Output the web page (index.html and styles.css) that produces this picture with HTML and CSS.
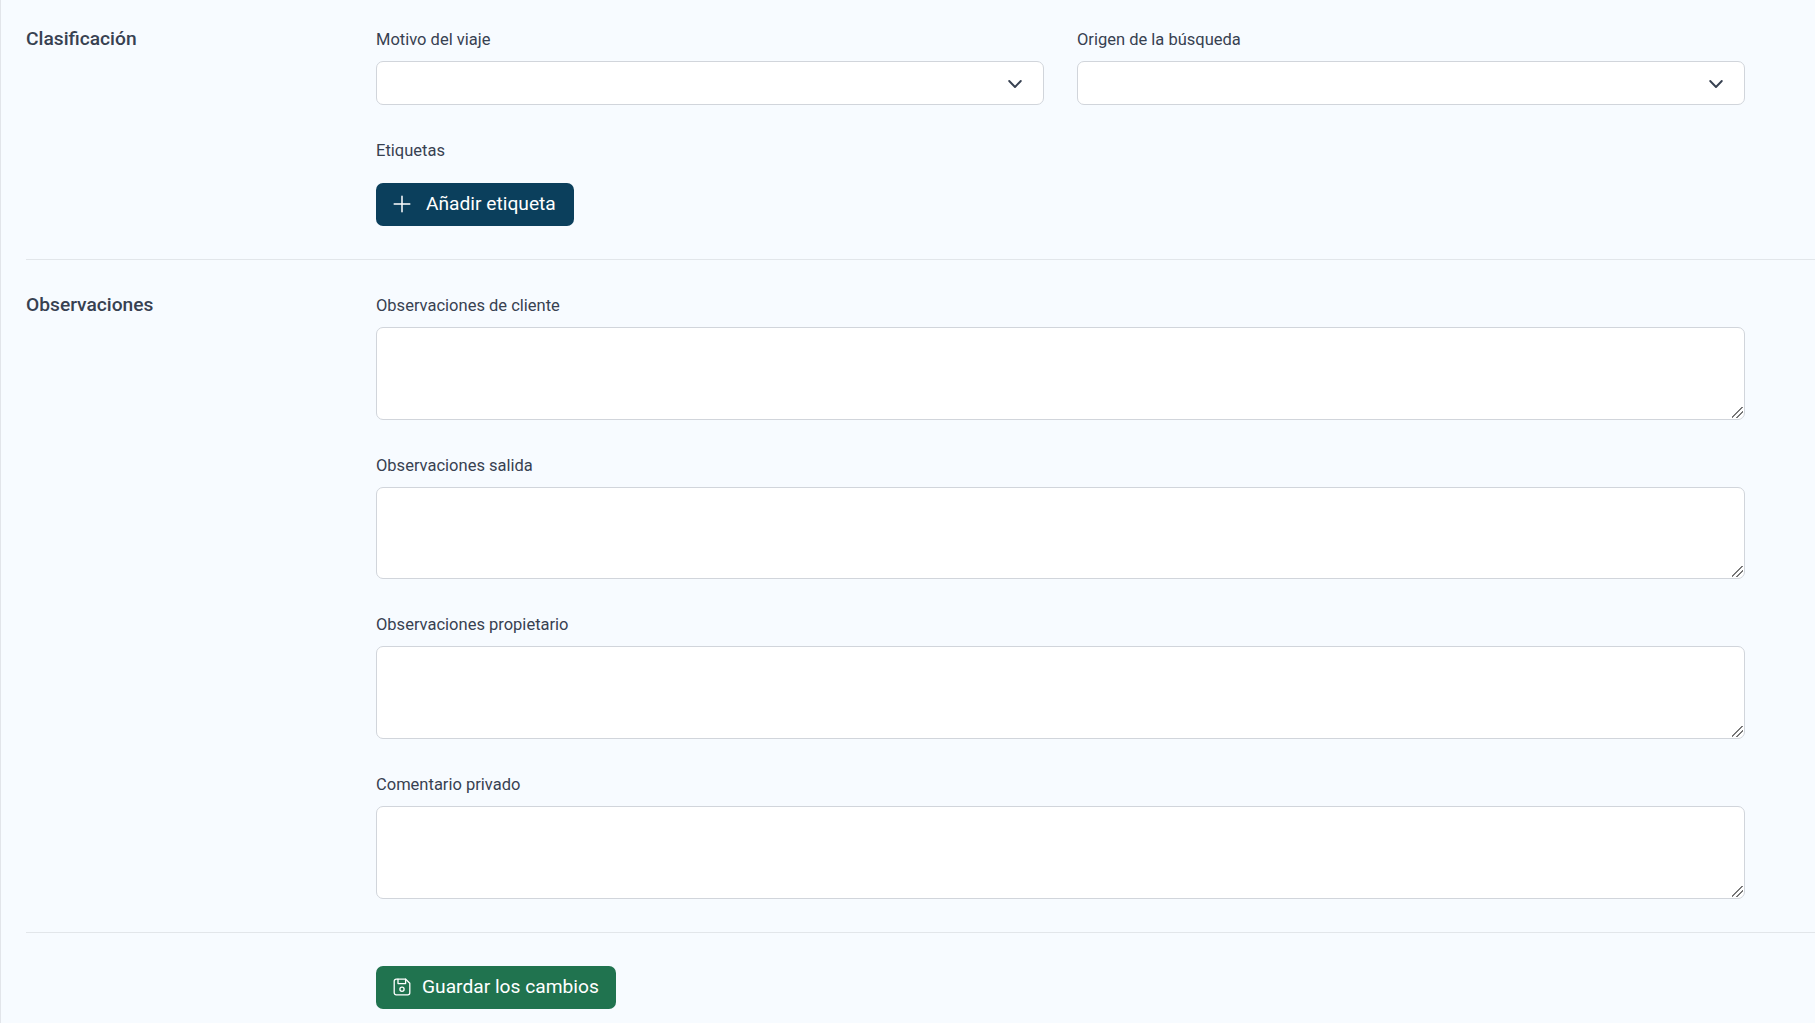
FILE: index.html
```html
<!DOCTYPE html>
<html lang="es">
<head>
<meta charset="utf-8">
<title>Clasificación y observaciones</title>
<link rel="stylesheet" href="styles.css">
</head>
<body>
<main class="page">
  <section class="section section-first">
    <h2 class="section-title">Clasificación</h2>
    <div class="fields">
      <div class="two-cols">
        <div class="field">
          <label class="label" for="motivo">Motivo del viaje</label>
          <div class="select-wrap">
            <select class="select" id="motivo"><option></option></select>
            <svg class="chevron" viewBox="0 0 20 20" fill="none" stroke="currentColor" stroke-width="1.9" stroke-linecap="round" stroke-linejoin="round"><path d="M4.2 7l5.8 6 5.8-6"/></svg>
          </div>
        </div>
        <div class="field">
          <label class="label" for="origen">Origen de la búsqueda</label>
          <div class="select-wrap">
            <select class="select" id="origen"><option></option></select>
            <svg class="chevron" viewBox="0 0 20 20" fill="none" stroke="currentColor" stroke-width="1.9" stroke-linecap="round" stroke-linejoin="round"><path d="M4.2 7l5.8 6 5.8-6"/></svg>
          </div>
        </div>
      </div>
      <div class="field">
        <span class="label">Etiquetas</span>
        <div class="button-row">
          <button class="btn btn-navy" type="button">
            <svg class="icon-plus" viewBox="0 0 18 18" fill="none" stroke="currentColor" stroke-width="1.5" stroke-linecap="round"><path d="M9 1.2v15.6M1.2 9h15.6"/></svg>
            Añadir etiqueta
          </button>
        </div>
      </div>
    </div>
  </section>

  <section class="section section-notes">
    <h2 class="section-title">Observaciones</h2>
    <div class="fields fields-notes">
      <div class="field">
        <label class="label" for="o1">Observaciones de cliente</label>
        <textarea class="textarea" id="o1"></textarea>
      </div>
      <div class="field">
        <label class="label" for="o2">Observaciones salida</label>
        <textarea class="textarea" id="o2"></textarea>
      </div>
      <div class="field">
        <label class="label" for="o3">Observaciones propietario</label>
        <textarea class="textarea" id="o3"></textarea>
      </div>
      <div class="field">
        <label class="label" for="o4">Comentario privado</label>
        <textarea class="textarea" id="o4"></textarea>
      </div>
    </div>
  </section>

  <footer class="actions">
    <button class="btn btn-green" type="button">
      <svg class="icon-save" viewBox="0 0 18 18" fill="none" stroke="currentColor" stroke-width="1.3" stroke-linecap="round" stroke-linejoin="round"><path d="M3.2 1.2h9.5l4.1 4.1v9.5a2 2 0 0 1-2 2H3.2a2 2 0 0 1-2-2V3.2a2 2 0 0 1 2-2z"/><path d="M5 1.2v4.4h7.6V1.2"/><circle cx="9" cy="11.3" r="2.1"/></svg>
      Guardar los cambios
    </button>
  </footer>
</main>
</body>
</html>
```

FILE: styles.css
```css
* {
  box-sizing: border-box;
}

html,
body {
  margin: 0;
  height: 100%;
}

body {
  background: #f7fbff;
  color: #374151;
  font-family: Roboto, "Liberation Sans", sans-serif;
  font-size: 16px;
  overflow: hidden;
}

.page {
  min-height: 100%;
  border-left: 1px solid #e2e5ea;
  padding-left: 25px;
}

.section {
  display: grid;
  grid-template-columns: 350px 1fr;
  padding: 33px 70px 33px 0;
  border-bottom: 1px solid #e2e6ea;
}

.section-first {
  padding-top: 28px;
}

.section-notes {
  padding-top: 34.1px;
  padding-bottom: 33.3px;
}

.section-title {
  margin: 0;
  font-size: 19.2px;
  line-height: 22px;
  font-weight: 500;
  color: #374151;
}

.fields {
  display: flex;
  flex-direction: column;
  gap: 34px;
}

.fields-notes {
  gap: 33.8px;
}

.two-cols {
  display: grid;
  grid-template-columns: 1fr 1fr;
  gap: 33px;
}

.field {
  display: flex;
  flex-direction: column;
  gap: 9px;
}

.label {
  display: block;
  font-size: 16.5px;
  line-height: 24px;
  color: #374151;
}

.select-wrap {
  position: relative;
}

.select {
  display: block;
  width: 100%;
  height: 44px;
  appearance: none;
  background: #fff;
  border: 1px solid #d1d5db;
  border-radius: 7px;
}

.chevron {
  position: absolute;
  top: 12.8px;
  right: 19px;
  width: 20px;
  height: 20px;
  color: #374151;
  pointer-events: none;
}

.button-row {
  padding-top: 11px;
  display: flex;
}

.btn {
  display: inline-flex;
  align-items: center;
  height: 43px;
  border: 0;
  border-radius: 7px;
  color: #fff;
  font-family: inherit;
  font-size: 19.2px;
  line-height: 41px;
  font-weight: 400;
}

.btn-navy {
  background: #0b3f5c;
  width: 198px;
  padding: 0 0 2px 17px;
  gap: 15px;
}

.btn-green {
  background: #20734f;
  width: 240px;
  padding: 0 0 1px 17px;
  gap: 11px;
}

.icon-plus {
  width: 18px;
  height: 18px;
}

.icon-save {
  width: 18px;
  height: 18px;
}

.textarea {
  display: block;
  width: 100%;
  height: 92.8px;
  margin: 0;
  background: #fff;
  border: 1px solid #d1d5db;
  border-radius: 7px;
  resize: vertical;
}

.textarea::-webkit-resizer {
  background: linear-gradient(135deg, transparent 44%, #777 44%, #777 53%, transparent 53%, transparent 66%, #777 66%, #777 75%, transparent 75%) no-repeat right 1px bottom 1px / 11px 11px;
}

.actions {
  padding: 33px 0 0 350px;
  display: flex;
}
```
